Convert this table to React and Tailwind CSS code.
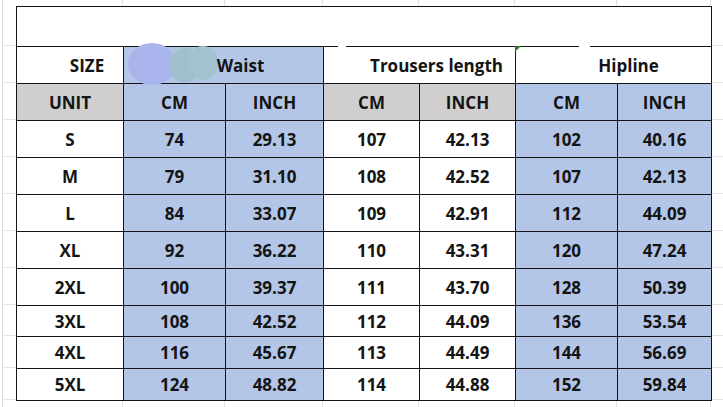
import React from "react";

const cols = [107, 102, 98, 96, 96, 102, 94];
const rowHeights = [40, 37, 37, 37, 37, 37, 37, 37, 31, 32, 32];

const rows = [
  ["S", "74", "29.13", "107", "42.13", "102", "40.16"],
  ["M", "79", "31.10", "108", "42.52", "107", "42.13"],
  ["L", "84", "33.07", "109", "42.91", "112", "44.09"],
  ["XL", "92", "36.22", "110", "43.31", "120", "47.24"],
  ["2XL", "100", "39.37", "111", "43.70", "128", "50.39"],
  ["3XL", "108", "42.52", "112", "44.09", "136", "53.54"],
  ["4XL", "116", "45.67", "113", "44.49", "144", "56.69"],
  ["5XL", "124", "48.82", "114", "44.88", "152", "59.84"],
];

// which columns are shaded blue in the body
const blueCol = [false, true, true, false, false, true, true];

const cell = "border border-[#141414] text-center align-middle p-0";

export default function App() {
  return (
    <div
      className="w-[723px] h-[407px] bg-white overflow-hidden text-[#141414] font-bold text-[17px] leading-none"
      style={{ fontFamily: '"Open Sans", "Noto Sans", sans-serif' }}
    >
      {/* faint sheet grid above table */}
      <div className="flex h-[6px]">
        <div className="w-[3px] border-r border-[#dcdcdc]" />
        <div className="w-[13px]" />
        {cols.map((w, i) => (
          <div key={i} style={{ width: w }} className="shrink-0 border-r border-[#e2e2e2]" />
        ))}
      </div>

      <div className="flex">
        {/* left gutter */}
        <div className="flex w-[16px] shrink-0">
          <div className="w-[3px] border-r border-[#dcdcdc]" />
          <div className="flex flex-1 flex-col">
            {rowHeights.map((h, i) => (
              <div key={i} style={{ height: h }} className="border-b border-[#e4e4e4]" />
            ))}
          </div>
        </div>

        <table className="table-fixed border-collapse w-[696px] shrink-0">
          <colgroup>
            {cols.map((w, i) => (
              <col key={i} style={{ width: w }} />
            ))}
          </colgroup>
          <tbody>
            <tr className="h-[40px]">
              <td colSpan={7} className={cell} />
            </tr>
            <tr className="h-[37px]">
              <td className={`${cell} pl-[34px]`}>SIZE</td>
              <td colSpan={2} className={`${cell} relative bg-[#b4c6e7] pl-[34px]`}>
                <span className="relative z-10">Waist</span>
                <div className="absolute left-[4px] top-[-4px] h-[42px] w-[48px] rounded-[50%] bg-[#aab5ee]" />
                <div className="absolute left-[46px] top-[1px] h-[35px] w-[30px] rounded-full bg-[#9fc0cc]" />
                <div className="absolute left-[64px] top-[-1px] h-[34px] w-[30px] rounded-full bg-[#a3c2cf]" />
              </td>
              <td colSpan={2} className={`${cell} relative pl-[34px]`}>
                Trousers length
                <div className="absolute left-[14px] top-[-2px] h-[3px] w-[8px] bg-white" />
              </td>
              <td colSpan={2} className={`${cell} relative pl-[30px]`}>
                Hipline
                <div className="absolute left-[-1px] top-[-1px] h-0 w-0 border-l-[6px] border-b-[6px] border-l-[#2f7a2f] border-b-transparent" />
                <div className="absolute left-[63px] top-[-2px] h-[3px] w-[11px] bg-white" />
              </td>
            </tr>
            <tr className="h-[37px]">
              <td className={`${cell} bg-[#d0cece]`}>UNIT</td>
              <td className={`${cell} bg-[#b4c6e7]`}>CM</td>
              <td className={`${cell} bg-[#b4c6e7]`}>INCH</td>
              <td className={`${cell} bg-[#d0cece]`}>CM</td>
              <td className={`${cell} bg-[#d0cece]`}>INCH</td>
              <td className={`${cell} bg-[#b4c6e7]`}>CM</td>
              <td className={`${cell} bg-[#b4c6e7]`}>INCH</td>
            </tr>
            {rows.map((r, ri) => (
              <tr key={ri} style={{ height: rowHeights[ri + 3] }}>
                {r.map((v, ci) => (
                  <td key={ci} className={`${cell} ${blueCol[ci] ? "bg-[#b4c6e7]" : "bg-white"}`}>
                    {v}
                  </td>
                ))}
              </tr>
            ))}
          </tbody>
        </table>

        {/* right gutter */}
        <div className="flex flex-1 flex-col">
          {rowHeights.map((h, i) => (
            <div key={i} style={{ height: h }} className="border-b border-[#e4e4e4]" />
          ))}
        </div>
      </div>

      {/* faint sheet grid below table */}
      <div className="flex h-[10px]">
        <div className="w-[3px] border-r border-[#dcdcdc]" />
        <div className="w-[13px]" />
        {cols.map((w, i) => (
          <div key={i} style={{ width: w }} className="shrink-0 border-r border-[#e2e2e2]" />
        ))}
      </div>
    </div>
  );
}
